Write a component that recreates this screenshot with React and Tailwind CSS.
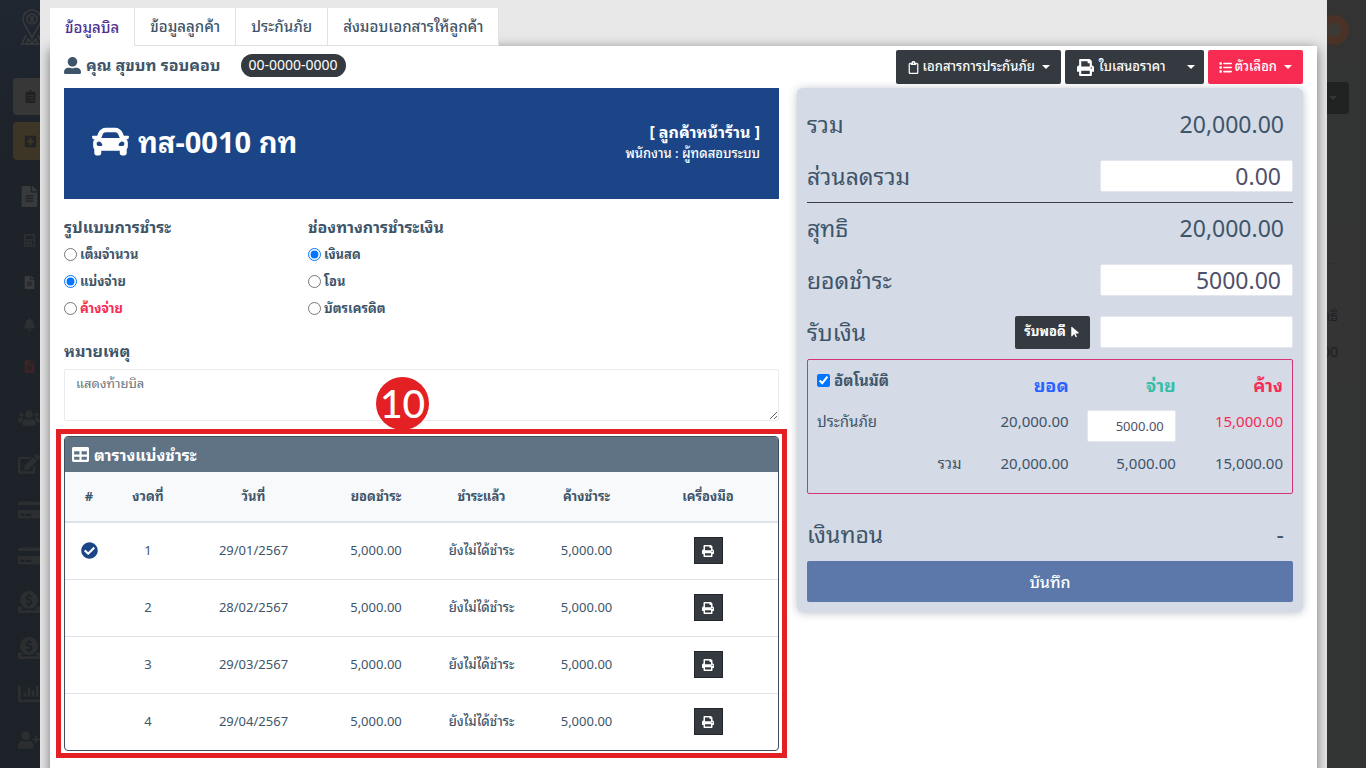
import { useState } from 'react'
import {
  FaBell, FaCalculator, FaChartBar, FaCheckCircle, FaClipboardList, FaCreditCard, FaDonate,
  FaCar, FaEdit, FaFileAlt, FaPlusSquare, FaPrint, FaTable, FaUserAlt, FaUserPlus, FaUsers
} from 'react-icons/fa'
import { FaArrowPointer, FaList, FaRegClipboard } from 'react-icons/fa6'

const tabs = ['ข้อมูลบิล', 'ข้อมูลลูกค้า', 'ประกันภัย', 'ส่งมอบเอกสารให้ลูกค้า']

const installments = [
  { no: 1, date: '29/01/2567', current: true },
  { no: 2, date: '28/02/2567' },
  { no: 3, date: '29/03/2567' },
  { no: 4, date: '29/04/2567' },
]

const menu = [
  { icon: FaFileAlt, style: 'h-11 text-[21px] text-[#383a3b]' },
  { icon: FaCalculator, style: 'h-11 text-[13px] text-[#2d3032]' },
  { icon: FaFileAlt, style: 'h-10 text-[13px] text-[#383a3b]' },
  { icon: FaBell, style: 'h-11 text-[13px] text-[#2d3032]' },
  { icon: FaFileAlt, style: 'h-10 text-[13px] text-[#3a2425]' },
  { icon: FaUsers, style: 'h-16 text-[22px] text-[#2c2e30]' },
  { icon: FaEdit, style: 'h-7 text-[22px] text-[#2c2e30]' },
  { icon: FaCreditCard, style: 'h-16 text-[22px] text-[#2c2e30]' },
  { icon: FaCreditCard, style: 'h-7 text-[22px] text-[#2c2e30]' },
  { icon: FaDonate, style: 'h-16 text-[22px] text-[#2c2e30]' },
  { icon: FaDonate, style: 'h-7 text-[22px] text-[#2c2e30]' },
  { icon: FaChartBar, style: 'h-16 text-[22px] text-[#2c2e30]' },
  { icon: FaUserPlus, style: 'h-7 text-[22px] text-[#2c2e30]' },
]

function Caret() {
  return <span className="border-x-4 border-t-4 border-x-transparent border-t-current"></span>
}

function Sidebar() {
  return (
    <aside className="w-[220px] h-full overflow-hidden bg-linear-to-b from-[#1f2731] via-[#1e2229] via-20% to-[#1d2228]">
      <div className="h-[78px] pt-2 pl-5">
        <svg viewBox="0 0 24 38" className="w-6 h-[38px]" fill="none" stroke="#3a3a3b" strokeWidth="1.5">
          <path d="M12 30C9 22 3 17 3 11a9 9 0 0 1 18 0c0 6-6 11-9 19z" />
          <circle cx="12" cy="11" r="5" />
          <path d="M10 9h4M10 11h4M10 13h4M6 27l-4 9h20l-4-9M7 36l1-5 4 4 4-4 1 5" />
        </svg>
      </div>
      <div className="ml-[13px] flex flex-col gap-[7px]">
        <div className="h-[37px] pl-[11px] flex items-center rounded-sm bg-[#373737] text-[#202122] text-[13px]"><FaClipboardList /></div>
        <div className="h-[38px] pl-[11px] flex items-center rounded-sm bg-[#3d3525] text-[#222324] text-[13px]"><FaPlusSquare /></div>
      </div>
      <div className="mt-[14px]">
        {menu.map(({ icon: Icon, style }, i) => (
          <div key={i} className={`w-[58px] flex items-center justify-center ${style}`}><Icon /></div>
        ))}
      </div>
    </aside>
  )
}

function Page() {
  return (
    <div className="flex h-full">
      <Sidebar />
      <div className="flex-1 flex flex-col items-end bg-[#323433] text-[#1f2020]">
        <div className="w-full h-[60px] pr-[17px] flex items-center justify-end bg-[#333333]">
          <div className="size-[30px] rounded-full border-8 border-[#4a3326] bg-[#3d3a36]"></div>
        </div>
        <div className="mt-[22px] mr-[17px] h-8 w-24 pr-3 rounded-sm flex items-center justify-end bg-[#202221] text-[#343635]"><Caret /></div>
        <div className="mt-[110px] mr-[13px] w-40 h-[158px] pr-[15px] flex flex-col items-end bg-[#343434] text-sm">
          <div className="w-full h-10 border-b border-[#303030]"></div>
          <div className="mt-[42px]">สุทธิ</div>
          <div className="mt-4">20,000.00</div>
        </div>
      </div>
    </div>
  )
}

function Choice({ name, label, checked, onChange, red }) {
  return (
    <label className={`flex items-center gap-[3px] h-[27px] text-[13px] font-bold ${red ? 'text-[#f82b52]' : ''}`}>
      <input type="radio" name={name} checked={checked} onChange={onChange} className="size-[13px] accent-[#0075ff]" />
      {label}
    </label>
  )
}

function ChoiceGroup({ title, name, options, value, onChange }) {
  return (
    <fieldset>
      <legend className="text-base leading-7 font-bold">{title}</legend>
      {options.map((item) => (
        <Choice key={item} name={name} label={item} checked={value === item} onChange={() => onChange(item)} red={item === 'ค้างจ่าย'} />
      ))}
    </fieldset>
  )
}

function InstallmentTable() {
  return (
    <div className="relative mt-[15px]">
      <div className="rounded-sm border border-[#3f4f5e] overflow-hidden">
        <h2 className="h-[35px] px-[7px] flex items-center gap-[5px] bg-[#607385] text-white text-base font-bold">
          <FaTable className="text-[17px]" />ตารางแบ่งชำระ
        </h2>
        <table className="w-full table-fixed text-center text-[13px]">
          <colgroup>
            <col className="w-[48px]" />
            <col className="w-[70px]" />
            <col className="w-[141px]" />
            <col className="w-[104px]" />
            <col className="w-[107px]" />
            <col className="w-[103px]" />
            <col />
          </colgroup>
          <thead>
            <tr className="h-[50px] bg-[#f8f9fb] border-b-2 border-[#dee2e9]">
              <th>#</th>
              <th>งวดที่</th>
              <th>วันที่</th>
              <th>ยอดชำระ</th>
              <th>ชำระแล้ว</th>
              <th>ค้างชำระ</th>
              <th>เครื่องมือ</th>
            </tr>
          </thead>
          <tbody>
            {installments.map((item) => (
              <tr key={item.no} className="h-[57px] border-b border-[#dee2e9] last:border-b-0">
                <td>{item.current && <FaCheckCircle className="mx-auto text-[17px] text-[#1c4587]" />}</td>
                <td>{item.no}</td>
                <td>{item.date}</td>
                <td>5,000.00</td>
                <td className="font-medium">ยังไม่ได้ชำระ</td>
                <td>5,000.00</td>
                <td>
                  <button aria-label="พิมพ์" className="w-[29px] h-[27px] inline-flex items-center justify-center align-middle bg-[#343a40] border border-[#23272b] text-white text-xs"><FaPrint /></button>
                </td>
              </tr>
            ))}
          </tbody>
        </table>
      </div>
      <div className="absolute -inset-x-2 -inset-y-[7px] border-[5px] border-[#e32124] pointer-events-none"></div>
      <div className="absolute left-[312px] -top-[59px] size-[53px] rounded-full bg-[#e32124] text-white text-[39px] font-['Lato',sans-serif] font-medium flex items-center justify-center">10</div>
    </div>
  )
}

function Summary() {
  const [auto, setAuto] = useState(true)
  const row = 'h-[52px] flex items-center justify-between'
  const box = 'w-[193px] h-8 px-[11px] bg-white border border-[#e4e8ee] rounded-xs text-right text-[#50506a] text-[23px]'

  return (
    <section className="self-start px-[10px] pt-[10px] pb-[10px] rounded-md bg-[#d4dae6] shadow-[0_1px_8px_rgba(60,75,100,0.35)] text-[23px]">
      <div className={row}><span>รวม</span><span className="pr-[9px]">20,000.00</span></div>
      <div className={row}>
        <label htmlFor="discount">ส่วนลดรวม</label>
        <input id="discount" defaultValue="0.00" className={box} />
      </div>
      <div className={`${row} border-t border-[#3a3f44]`}><span>สุทธิ</span><span className="pr-[9px]">20,000.00</span></div>
      <div className={row}>
        <label htmlFor="pay">ยอดชำระ</label>
        <input id="pay" defaultValue="5000.00" className={box} />
      </div>
      <div className={row}>
        <label htmlFor="cash">รับเงิน</label>
        <div className="flex items-center gap-[10px]">
          <button className="w-[75px] h-[33px] flex items-center justify-center gap-[3px] rounded-xs bg-[#343a40] text-white text-[13px] font-bold">รับพอดี<FaArrowPointer className="text-xs" /></button>
          <input id="cash" className={box} />
        </div>
      </div>
      <div className="mt-px h-[135px] px-[9px] border border-[#d63374] rounded-xs">
        <table className="w-full table-fixed text-[15px] text-right">
          <colgroup>
            <col className="w-[31%]" />
            <col className="w-[23%]" />
            <col className="w-[23%]" />
            <col className="w-[23%]" />
          </colgroup>
          <thead>
            <tr className="h-[42px] text-lg">
              <th className="text-left text-[15px]">
                <label className="flex items-center gap-1">
                  <input type="checkbox" checked={auto} onChange={() => setAuto(!auto)} className="size-[13px] accent-[#0075ff]" />
                  อัตโนมัติ
                </label>
              </th>
              <th className="pt-2 text-[#2962ff]">ยอด</th>
              <th className="pt-2 text-[#36bea6]">จ่าย</th>
              <th className="pt-2 text-[#f82b52]">ค้าง</th>
            </tr>
          </thead>
          <tbody>
            <tr className="h-[46px] align-top">
              <td className="text-left pt-2">ประกันภัย</td>
              <td className="pt-2">20,000.00</td>
              <td className="pt-2"><input aria-label="จ่าย" defaultValue="5000.00" className="w-[89px] h-8 px-[11px] bg-white border border-[#e4e8ee] rounded-xs text-right text-[#50506a] text-[13px]" /></td>
              <td className="pt-2 text-[#f82b52]">15,000.00</td>
            </tr>
            <tr className="h-[30px]">
              <td>รวม</td>
              <td>20,000.00</td>
              <td>5,000.00</td>
              <td>15,000.00</td>
            </tr>
          </tbody>
        </table>
      </div>
      <div className="h-[67px] pt-[14px] flex items-center justify-between"><span>เงินทอน</span><span className="pr-[9px]">-</span></div>
      <button className="w-full h-[41px] rounded-xs bg-[#5c78aa] text-white text-base font-medium">บันทึก</button>
    </section>
  )
}

function App() {
  const [type, setType] = useState('แบ่งจ่าย')
  const [channel, setChannel] = useState('เงินสด')

  return (
    <div className="relative h-screen overflow-hidden text-[#3e5569] font-['Noto_Sans','Noto_Sans_Thai_Looped','Loma',sans-serif]">
      <Page />
      <div role="dialog" className="absolute inset-y-0 left-10 right-[39px] px-[10px] pt-2 bg-[#e8e8e8] overflow-hidden">
        <nav className="flex h-[38px] text-[15px] font-medium">
          {tabs.map((item, i) => (
            <a key={item} href="#" className={`px-[15px] flex items-center bg-white border-r border-[#dee2e6] ${i === 0 ? 'text-[#4f3090]' : 'border-b'}`}>{item}</a>
          ))}
        </nav>
        <div className="min-h-screen px-[14px] pt-1 bg-white shadow-[0_3px_12px_rgba(0,0,0,0.5)]">
          <div className="flex items-start justify-between">
            <div className="h-[30px] flex items-center text-base font-bold">
              <FaUserAlt className="mr-[5px] text-[17px]" />
              <span>คุณ สุขบท รอบคอบ</span>
              <span className="ml-5 px-2 h-[23px] flex items-center rounded-full bg-[#343a40] text-white text-sm font-normal">00-0000-0000</span>
            </div>
            <div className="flex gap-1 text-white text-[13px] font-medium">
              <button className="h-[34px] px-[11px] flex items-center gap-[3px] rounded-xs bg-[#343a40]"><FaRegClipboard />เอกสารการประกันภัย<span className="ml-1 flex"><Caret /></span></button>
              <button className="h-[34px] pl-3 pr-[9px] flex items-center gap-[5px] rounded-xs bg-[#343a40]"><FaPrint className="text-[17px]" />ใบเสนอราคา<span className="ml-4 flex"><Caret /></span></button>
              <button className="h-[34px] px-[11px] flex items-center gap-[3px] rounded-xs bg-[#f82b52]"><FaList />ตัวเลือก<span className="ml-1 flex"><Caret /></span></button>
            </div>
          </div>
          <div className="mt-1 grid grid-cols-[715fr_506fr] gap-[18px]">
            <div>
              <div className="h-[111px] pl-7 pr-[19px] pb-1 flex items-center justify-between bg-[#1c4587] text-white">
                <h1 className="flex items-center gap-[9px] text-[29px] font-bold"><FaCar className="text-[37px]" />ทส-0010 กท</h1>
                <div className="text-right">
                  <p className="text-base font-bold">[ ลูกค้าหน้าร้าน ]</p>
                  <p className="text-[13px] font-medium">พนักงาน : ผู้ทดสอบระบบ</p>
                </div>
              </div>
              <div className="mt-[14px] flex">
                <div className="w-[244px]">
                  <ChoiceGroup title="รูปแบบการชำระ" name="type" options={['เต็มจำนวน', 'แบ่งจ่าย', 'ค้างจ่าย']} value={type} onChange={setType} />
                </div>
                <ChoiceGroup title="ช่องทางการชำระเงิน" name="channel" options={['เงินสด', 'โอน', 'บัตรเครดิต']} value={channel} onChange={setChannel} />
              </div>
              <label htmlFor="note" className="block mt-[15px] text-base leading-7 font-bold">หมายเหตุ</label>
              <textarea id="note" placeholder="แสดงท้ายบิล" className="block mt-1 w-full h-[52px] px-[11px] py-1 border border-[#e9ecef] rounded-xs text-[13px] placeholder:text-[#6c757d]"></textarea>
              <InstallmentTable />
            </div>
            <Summary />
          </div>
        </div>
      </div>
    </div>
  )
}

export default App;
